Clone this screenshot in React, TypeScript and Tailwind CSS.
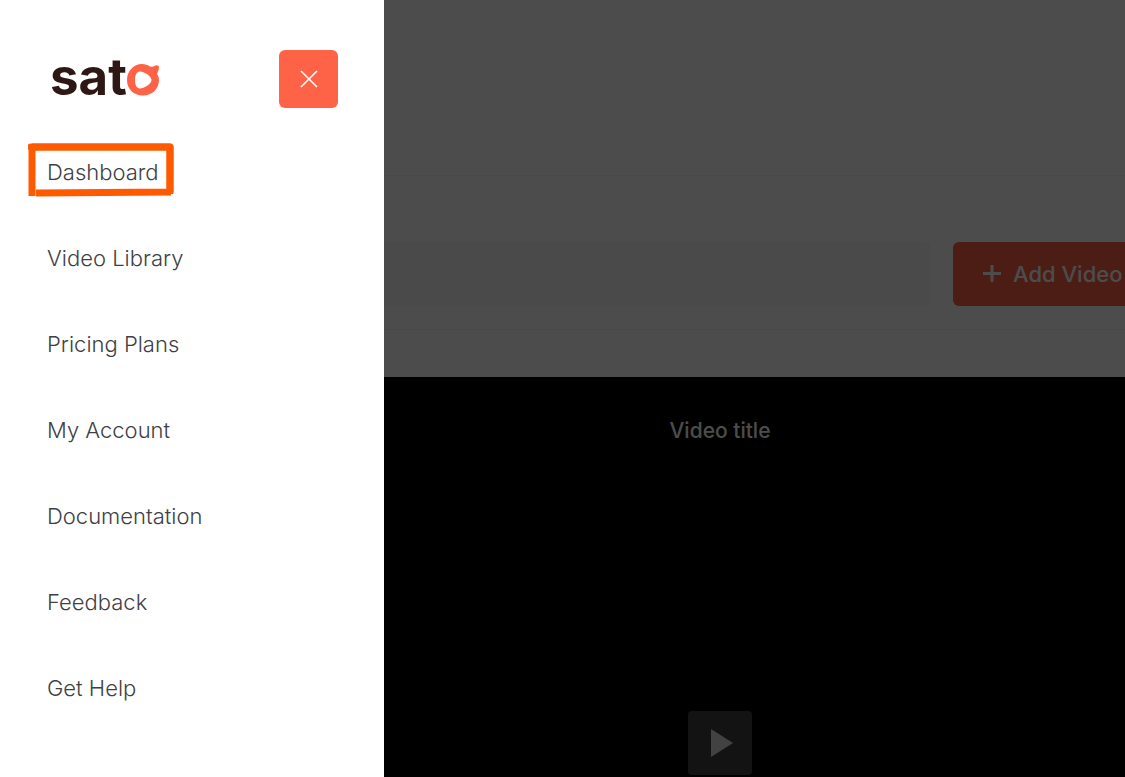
import React from 'react';

const menuItems = [
  { label: 'Dashboard', href: '#dashboard', marked: true },
  { label: 'Video Library', href: '#library' },
  { label: 'Pricing Plans', href: '#pricing' },
  { label: 'My Account', href: '#account' },
  { label: 'Documentation', href: '#docs' },
  { label: 'Feedback', href: '#feedback' },
  { label: 'Get Help', href: '#help' },
];

const Logo = () => (
  <a href="#home" aria-label="sato" className="block">
    <svg width="112" height="72" viewBox="0 0 112 72">
      <text
        x="0"
        y="52"
        fontSize="51"
        className="fill-[#2d1815] font-[Inter,sans-serif] font-bold"
      >
        sat
      </text>
      {/* Ring with a play-shaped hole */}
      <path
        fill="#ff6347"
        fillRule="evenodd"
        d="M92 21C95 21 98 22 100 23.500C102 24.500 104 23 106 22.500C108 22 109 23 109 25C109 27 107.500 29 107 31C108.500 33 109 35 109 37C109 46 102 52.500 93 52.500C83.500 52.500 77 46 77 37C77 28 83.500 21 92 21ZM90 28.500C86.500 28.500 85 32.500 85 37C85 41.500 86.500 45.500 90 45.500C94 45.500 101.500 41 101.500 37C101.500 33 94 28.500 90 28.500Z"
      />
    </svg>
  </a>
);

const Drawer = () => (
  <aside className="absolute inset-y-0 left-0 w-96 bg-white">
    <div className="flex items-center justify-between pt-[43px] pl-[50px] pr-[46px]">
      <Logo />
      <button
        type="button"
        aria-label="Close menu"
        className="flex h-[58px] w-[59px] items-center justify-center rounded-md bg-[#ff6347] text-white"
      >
        <svg width="18" height="18" viewBox="0 0 18 18" stroke="currentColor" strokeWidth="1.6">
          <path d="M1 1l16 16M17 1L1 17" />
        </svg>
      </button>
    </div>

    <nav className="mt-[14px]">
      <ul>
        {menuItems.map((item) => (
          <li key={item.label} className="relative flex h-[86px] items-center pl-[47px]">
            <a href={item.href} className="text-[22px] leading-8 font-light text-[#3f3f46]">
              {item.label}
            </a>
            {item.marked && (
              <svg
                className="pointer-events-none absolute top-[14px] left-7"
                width="146"
                height="54"
                viewBox="0 0 146 54"
                fill="none"
                stroke="#ff5a00"
                strokeWidth="7"
                strokeLinejoin="round"
              >
                <path d="M4 4H142V49M4 3V53M8 50L143 49" />
                <path d="M3 4H142" strokeLinecap="round" />
                <path d="M142 5V51" />
              </svg>
            )}
          </li>
        ))}
      </ul>
    </nav>
  </aside>
);

const App = () => {
  return (
    <div className="relative flex min-h-screen flex-col overflow-hidden bg-white font-[Inter,sans-serif]">
      <header className="h-[176px] border-b border-[#f0f0f0]" />

      <div className="flex gap-[23px] border-b border-[#f0f0f0] pt-[66px] pb-[23px] pl-[46px]">
        <input
          type="search"
          aria-label="Search videos"
          className="h-16 min-w-0 flex-1 rounded-md bg-[#f8f8f8] px-6"
        />
        <button
          type="button"
          className="flex h-16 w-[172px] shrink-0 items-center gap-3 rounded-l-md bg-[#ff6347] pl-[30px] text-[22px] font-medium whitespace-nowrap text-white"
        >
          <svg width="18" height="18" viewBox="0 0 18 18" stroke="currentColor" strokeWidth="3">
            <path d="M0 8.500H18M9 0V17" />
          </svg>
          Add Video
        </button>
      </div>

      <main className="mt-[47px] flex flex-1 flex-col items-center bg-black pl-[315px]">
        <h2 className="mt-[38px] text-[21px] leading-8 font-medium text-white">Video title</h2>
        <button
          type="button"
          aria-label="Play video"
          className="mt-[264px] flex size-16 items-center justify-center rounded-sm bg-[#424242] text-[#dedede]"
        >
          <svg width="22" height="28" viewBox="0 0 22 28" fill="currentColor" className="ml-1">
            <path d="M0 0L22 14L0 28z" />
          </svg>
        </button>
      </main>

      {/* Backdrop */}
      <div className="absolute inset-0 bg-black/70" />
      <Drawer />
    </div>
  );
};

export default App;
